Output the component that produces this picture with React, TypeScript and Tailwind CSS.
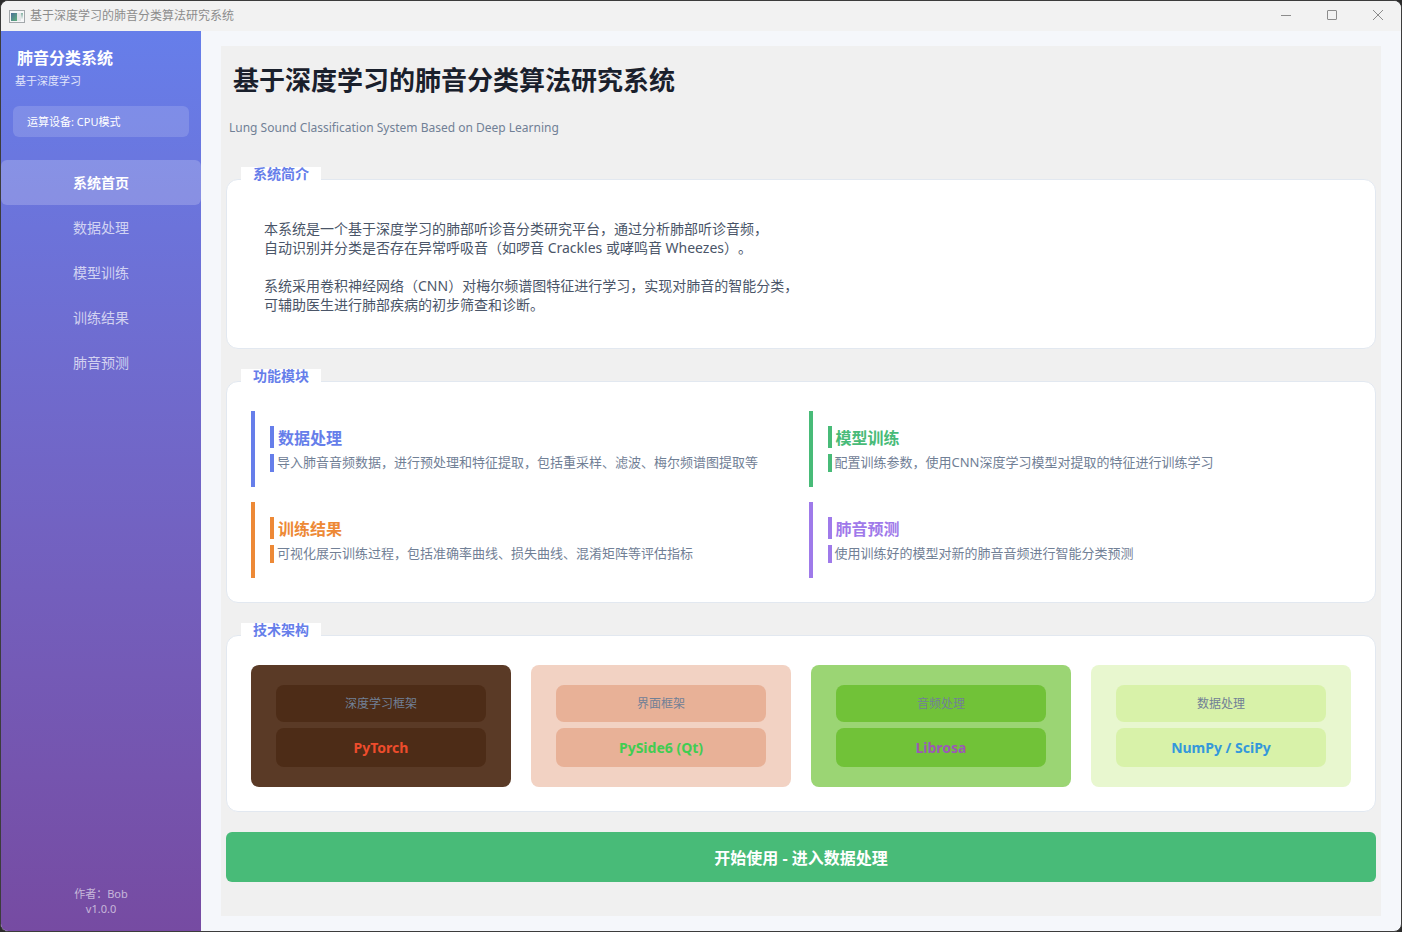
import { useState } from "react";

const navItems = ["系统首页", "数据处理", "模型训练", "训练结果", "肺音预测"];

const features = [
  {
    title: "数据处理",
    desc: "导入肺音音频数据，进行预处理和特征提取，包括重采样、滤波、梅尔频谱图提取等",
    border: "border-[#667eea]",
    text: "text-[#667eea]",
  },
  {
    title: "模型训练",
    desc: "配置训练参数，使用CNN深度学习模型对提取的特征进行训练学习",
    border: "border-[#48bb78]",
    text: "text-[#48bb78]",
  },
  {
    title: "训练结果",
    desc: "可视化展示训练过程，包括准确率曲线、损失曲线、混淆矩阵等评估指标",
    border: "border-[#ed8936]",
    text: "text-[#ed8936]",
  },
  {
    title: "肺音预测",
    desc: "使用训练好的模型对新的肺音音频进行智能分类预测",
    border: "border-[#9f7aea]",
    text: "text-[#9f7aea]",
  },
];

const techs = [
  {
    label: "深度学习框架",
    name: "PyTorch",
    card: "bg-[#5a3a26]",
    cell: "bg-[#4d2c17]",
    text: "text-[#ee4c2c]",
  },
  {
    label: "界面框架",
    name: "PySide6 (Qt)",
    card: "bg-[#f2d2c3]",
    cell: "bg-[#e8b197]",
    text: "text-[#41cd52]",
  },
  {
    label: "音频处理",
    name: "Librosa",
    card: "bg-[#9bd574]",
    cell: "bg-[#71c238]",
    text: "text-[#9b59b6]",
  },
  {
    label: "数据处理",
    name: "NumPy / SciPy",
    card: "bg-[#e8f7cf]",
    cell: "bg-[#d8f2a9]",
    text: "text-[#3498db]",
  },
];

function TitleBar() {
  return (
    <header className="flex h-[30px] shrink-0 items-center justify-between bg-[#f2f2f2] pl-2 text-[#8c8c8c]">
      <div className="flex items-center gap-[5px]">
        <svg width="16" height="13" viewBox="0 0 16 13">
          <defs>
            <linearGradient id="appIcon" x1="0" y1="0" x2="1" y2="1">
              <stop offset="0" stopColor="#4a6f98" />
              <stop offset="1" stopColor="#5fb07c" />
            </linearGradient>
            <linearGradient id="appIconSide" x1="0" y1="0" x2="0" y2="1">
              <stop offset="0" stopColor="#86b3a4" />
              <stop offset="1" stopColor="#eef0f1" />
            </linearGradient>
          </defs>
          <rect x="0.5" y="0.5" width="15" height="12" fill="#f6f7f8" stroke="#a3a8ab" />
          <rect x="2" y="3" width="6" height="8" fill="url(#appIcon)" />
          <rect x="8" y="3" width="4" height="8" fill="#e3e6e8" />
          <rect x="12" y="3" width="2" height="6" fill="url(#appIconSide)" />
        </svg>
        <span className="text-[12px] leading-4">基于深度学习的肺音分类算法研究系统</span>
      </div>
      <div className="flex h-full pb-0.5">
        <button aria-label="最小化" className="flex w-[46px] items-center justify-center">
          <svg width="10" height="10" viewBox="0 0 10 10" stroke="currentColor">
            <path d="M0 5.5h10" />
          </svg>
        </button>
        <button aria-label="最大化" className="flex w-[46px] items-center justify-center">
          <svg width="10" height="10" viewBox="0 0 10 10" fill="none" stroke="currentColor">
            <rect x="0.5" y="0.5" width="9" height="9" rx="0.5" />
          </svg>
        </button>
        <button aria-label="关闭" className="flex w-[46px] items-center justify-center">
          <svg width="10" height="10" viewBox="0 0 10 10" stroke="currentColor">
            <path d="M0 0l10 10M10 0L0 10" />
          </svg>
        </button>
      </div>
    </header>
  );
}

function Sidebar() {
  const [active, setActive] = useState("系统首页");

  return (
    <aside className="flex w-[200px] shrink-0 flex-col bg-gradient-to-b from-[#667eea] to-[#764ba2] text-white">
      <h2 className="px-4 pt-[15px] text-[16px] leading-6 font-bold">肺音分类系统</h2>
      <p className="px-3.5 pt-[3px] text-[11px] leading-4 text-white/80">基于深度学习</p>
      <div className="mx-3 mt-[17px] rounded-md bg-white/15 px-3.5 py-2 text-[11px] leading-[15px]">
        运算设备: CPU模式
      </div>

      <nav className="mt-[23px] flex flex-col">
        {navItems.map((item) => (
          <button
            key={item}
            onClick={() => setActive(item)}
            className={
              item === active
                ? "h-[45px] rounded-md bg-white/20 text-[14px] font-bold text-white"
                : "h-[45px] rounded-md text-[14px] text-white/70"
            }
          >
            {item}
          </button>
        ))}
      </nav>

      <div className="mt-auto pb-[15px] text-center font-['Noto_Sans','Noto_Sans_CJK_JP',sans-serif] text-[11px] leading-[15px] text-white/60">
        <p>作者：Bob</p>
        <p>v1.0.0</p>
      </div>
    </aside>
  );
}

function GroupBox({ title, children }: { title: string; children: React.ReactNode }) {
  return (
    <section className="mt-5">
      {/* The heading tab overlaps the top border of the box */}
      <h2 className="relative z-10 -mb-0.5 ml-[15px] h-3.5 w-20 bg-white px-3 text-[14px] leading-[14px] font-bold whitespace-nowrap text-[#667eea]">
        {title}
      </h2>
      <div className="rounded-xl border border-[#e2e8f0] bg-white px-6 pt-[29px] pb-6">{children}</div>
    </section>
  );
}

function FeatureCard({ feature }: { feature: (typeof features)[0] }) {
  return (
    <div className={`border-l-4 py-[15px] pl-[15px] ${feature.border}`}>
      <h3 className={`border-l-4 pt-0.5 pl-1 text-[16px] leading-5 font-bold ${feature.border} ${feature.text}`}>
        {feature.title}
      </h3>
      <p className={`mt-1.5 border-l-4 pb-0.5 pl-[3px] text-[13px] leading-4 text-[#718096] ${feature.border}`}>
        {feature.desc}
      </p>
    </div>
  );
}

function TechCard({ tech }: { tech: (typeof techs)[0] }) {
  return (
    <div className={`flex flex-col gap-1.5 rounded-lg px-[25px] py-5 text-center ${tech.card}`}>
      <p className={`rounded-lg text-[12px] leading-[37px] text-[#718096] ${tech.cell}`}>{tech.label}</p>
      <p className={`rounded-lg text-[14px] leading-[39px] font-bold ${tech.cell} ${tech.text}`}>{tech.name}</p>
    </div>
  );
}

export default function App() {
  return (
    <div
      className="min-h-screen bg-[#2b2b2b] font-['Noto_Sans','Noto_Sans_CJK_SC',sans-serif] [text-spacing-trim:space-all]"
      lang="zh-CN"
    >
      <div className="flex min-h-screen flex-col overflow-hidden rounded-lg border border-[#3c3c3c] bg-[#f5f7fb]">
        <TitleBar />
        <div className="flex flex-1">
          <Sidebar />
          <main className="flex min-w-0 flex-1 flex-col px-5 py-[15px]">
            <div className="flex-1 bg-[#f0f0f0] px-[5px] pt-4 pb-[34px]">
              <h1 className="px-[7px] text-[26px] leading-9 font-bold text-[#1a202c]">
                基于深度学习的肺音分类算法研究系统
              </h1>
              <p className="mt-[21px] mb-[30px] px-[3px] text-[12px] leading-[18px] text-[#718096]">
                Lung Sound Classification System Based on Deep Learning
              </p>

              <GroupBox title="系统简介">
                <div className="px-[13px] py-2.5 text-[14px] leading-[19px] text-[#4a5568]">
                  <p>
                    本系统是一个基于深度学习的肺部听诊音分类研究平台，通过分析肺部听诊音频，
                    <br />
                    自动识别并分类是否存在异常呼吸音（如啰音 Crackles 或哮鸣音 Wheezes）。
                  </p>
                  <p className="mt-[19px]">
                    系统采用卷积神经网络（CNN）对梅尔频谱图特征进行学习，实现对肺音的智能分类，
                    <br />
                    可辅助医生进行肺部疾病的初步筛查和诊断。
                  </p>
                </div>
              </GroupBox>

              <GroupBox title="功能模块">
                <div className="grid grid-cols-2 gap-[15px]">
                  {features.map((feature) => (
                    <FeatureCard key={feature.title} feature={feature} />
                  ))}
                </div>
              </GroupBox>

              <GroupBox title="技术架构">
                <div className="grid grid-cols-4 gap-5">
                  {techs.map((tech) => (
                    <TechCard key={tech.name} tech={tech} />
                  ))}
                </div>
              </GroupBox>

              <button className="mt-5 h-[50px] w-full rounded-md bg-[#48bb78] pt-0.5 text-[16px] font-bold text-white">
                开始使用 - 进入数据处理
              </button>
            </div>
          </main>
        </div>
      </div>
    </div>
  );
}
